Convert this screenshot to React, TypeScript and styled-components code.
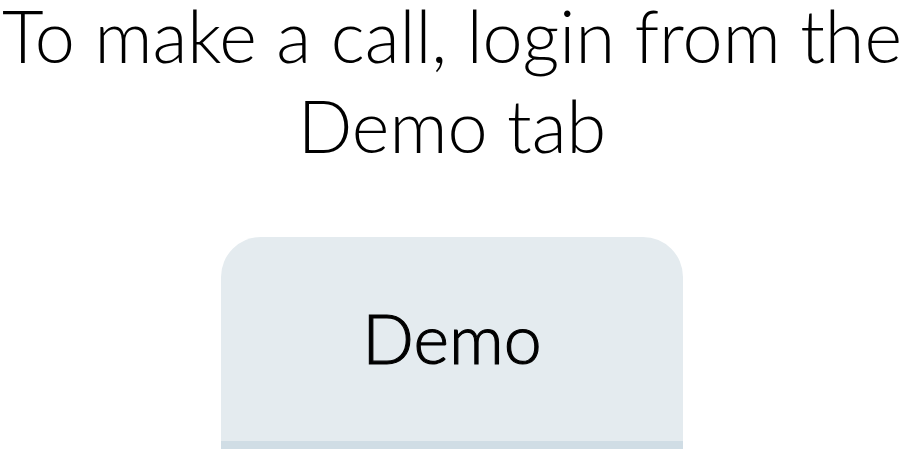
import React from "react";
import styled, { createGlobalStyle } from "styled-components";

const Global = createGlobalStyle`
  html, body { margin: 0; padding: 0; background: #ffffff; }
  body { font-family: Lato, "Open Sans", sans-serif; color: #000; overflow: hidden; }
`;

const Page = styled.div`
  width: 904px;
  display: flex;
  flex-direction: column;
  align-items: center;
`;

const Heading = styled.h1`
  margin: -10px 0 0;
  font-family: Lato, sans-serif;
  font-weight: 300;
  font-size: 72px;
  line-height: 90px;
  text-align: center;
  color: #000;
`;

const TabBar = styled.div`
  margin-top: 67px;
  display: flex;
  justify-content: center;
`;

const Tab = styled.button<{ $active?: boolean }>`
  width: 462px;
  height: 212px;
  box-sizing: border-box;
  border: none;
  border-radius: 40px 40px 0 0;
  background: #e4ebef;
  border-bottom: 8px solid #d0dde5;
  font-family: Lato, sans-serif;
  font-weight: 300;
  -webkit-text-stroke: 1.1px #000;
  font-size: 68px;
  color: #000;
  display: flex;
  align-items: center;
  justify-content: center;
  padding: 0 0 4px;
  cursor: pointer;
`;

export default function App() {
  return (
    <>
      <Global />
      <Page>
        <Heading>
          To make a call, login from the
          <br />
          Demo tab
        </Heading>
        <TabBar>
          <Tab $active>Demo</Tab>
        </TabBar>
      </Page>
    </>
  );
}
